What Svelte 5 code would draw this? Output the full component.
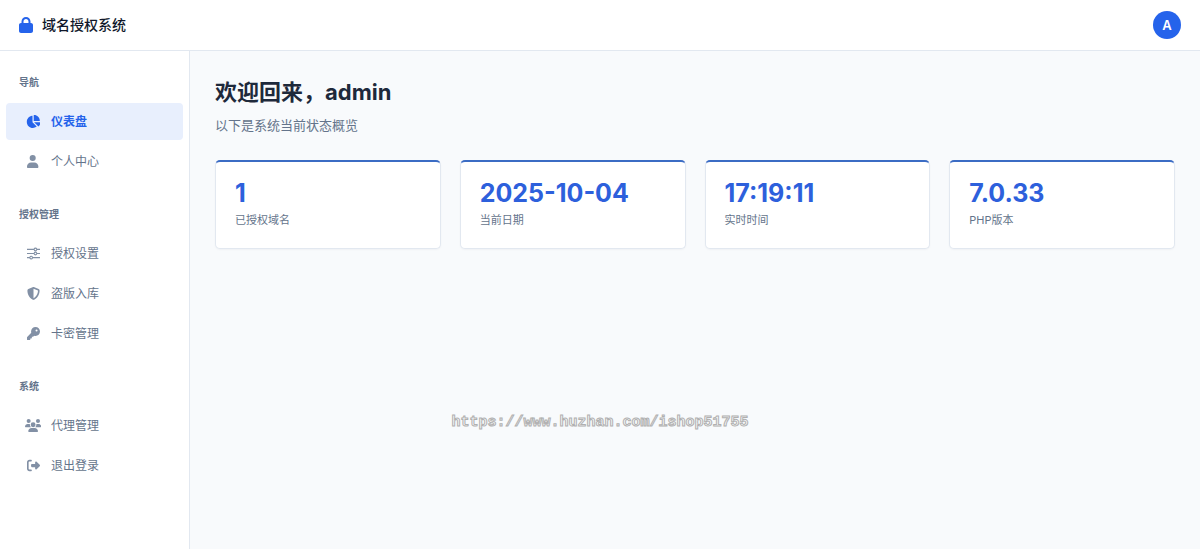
<script lang="ts">
  interface NavItem {
    label: string
    icon: string
    href: string
  }

  interface NavGroup {
    title: string
    items: NavItem[]
  }

  const username = 'admin'
  const current = '#dashboard'

  const groups: NavGroup[] = [
    {
      title: '导航',
      items: [
        { label: '仪表盘', icon: 'pie', href: '#dashboard' },
        { label: '个人中心', icon: 'user', href: '#profile' },
      ],
    },
    {
      title: '授权管理',
      items: [
        { label: '授权设置', icon: 'sliders', href: '#auth' },
        { label: '盗版入库', icon: 'shield', href: '#piracy' },
        { label: '卡密管理', icon: 'key', href: '#cards' },
      ],
    },
    {
      title: '系统',
      items: [
        { label: '代理管理', icon: 'users', href: '#agents' },
        { label: '退出登录', icon: 'logout', href: '#logout' },
      ],
    },
  ]

  const stats = [
    { value: '1', label: '已授权域名' },
    { value: '2025-10-04', label: '当前日期' },
    { value: '17:19:11', label: '实时时间' },
    { value: '7.0.33', label: 'PHP版本' },
  ]

  // width is the viewBox width, every icon is 512 high
  const icons: Record<string, { width: number; path: string }> = {
    pie: {
      width: 576,
      path: 'M304 240V16.6c0-9 7-16.6 16-16.6C443.7 0 544 100.3 544 224c0 9-7.6 16-16.6 16H304zM32 272C32 150.7 122.1 50.3 239 34.3c9.2-1.3 17 6.1 17 15.4V288L412.5 444.5c6.7 6.7 6.2 17.7-1.5 23.1C371.8 495.6 323.8 512 272 512C139.5 512 32 404.6 32 272zm526.4 16c9.3 0 16.6 7.8 15.4 17c-7.7 55.9-34.6 105.6-73.9 142.3c-6 5.6-15.4 5.2-21.2-.7L320 288H558.4z',
    },
    user: {
      width: 448,
      path: 'M224 240A120 120 0 1 0 224 0a120 120 0 1 0 0 240zM160 296C70 296 0 366 0 452v20c0 22 16 40 38 40H410c22 0 38-18 38-40v-20C448 366 378 296 288 296H160z',
    },
    sliders: {
      width: 512,
      path: 'M0 72h262a74 74 0 0 1 140 0H512v48H402a74 74 0 0 1-140 0H0zM332 64a32 32 0 1 0 0 64 32 32 0 1 0 0-64zM0 232h262a74 74 0 0 1 140 0H512v48H402a74 74 0 0 1-140 0H0zM332 224a32 32 0 1 0 0 64 32 32 0 1 0 0-64zM0 392h94a74 74 0 0 1 140 0H512v48H234a74 74 0 0 1-140 0H0zM164 384a32 32 0 1 0 0 64 32 32 0 1 0 0-64z',
    },
    shield: {
      width: 512,
      path: 'M256 0c4.6 0 9.2 1 13.4 2.9L457.7 82.8c22 9.3 38.4 31 38.3 57.2c-.5 99.2-41.3 280.7-213.6 363.2c-16.7 8-36.1 8-52.8 0C57.3 420.7 16.5 239.2 16 140c-.1-26.2 16.3-47.9 38.3-57.2L242.7 2.9C246.8 1 251.4 0 256 0zm0 66.8V444.8C394 378 431.1 230.1 432 141.4L256 66.8z',
    },
    key: {
      width: 512,
      path: 'M336 352c97.2 0 176-78.8 176-176S433.2 0 336 0S160 78.8 160 176c0 18.7 2.9 36.8 8.3 53.7L7 391c-4.5 4.5-7 10.6-7 17v80c0 13.3 10.7 24 24 24h80c13.3 0 24-10.7 24-24V448h40c13.3 0 24-10.7 24-24V384h40c6.4 0 12.5-2.5 17-7l33.3-33.3c16.9 5.4 35 8.3 53.7 8.3zM376 96a40 40 0 1 1 0 80 40 40 0 1 1 0-80z',
    },
    users: {
      width: 640,
      path: 'M144 0a80 80 0 1 1 0 160A80 80 0 1 1 144 0zM512 0a80 80 0 1 1 0 160A80 80 0 1 1 512 0zM0 298.7C0 239.8 47.8 192 106.7 192h42.7c15.9 0 31 3.5 44.6 9.7c-1.3 7.2-1.9 14.7-1.9 22.3c0 38.2 16.8 72.5 43.3 96c-.2 0-.4 0-.7 0H21.3C9.6 320 0 310.4 0 298.7zM405.3 320c-.2 0-.4 0-.7 0c26.6-23.5 43.3-57.8 43.3-96c0-7.6-.7-15-1.9-22.3c13.6-6.3 28.7-9.7 44.6-9.7h42.7C592.2 192 640 239.8 640 298.7c0 11.8-9.6 21.3-21.3 21.3H405.3zM224 224a96 96 0 1 1 192 0 96 96 0 1 1 -192 0zM128 485.3C128 411.7 187.7 352 261.3 352H378.7C452.3 352 512 411.7 512 485.3c0 14.7-11.9 26.7-26.7 26.7H154.7c-14.7 0-26.7-11.9-26.7-26.7z',
    },
    logout: {
      width: 512,
      path: 'M377.9 105.9L500.7 228.7c7.2 7.2 11.3 17.1 11.3 27.3s-4.1 20.1-11.3 27.3L377.9 406.1c-6.4 6.4-15 9.9-24 9.9c-18.7 0-33.9-15.2-33.9-33.9l0-62.1-128 0c-17.7 0-32-14.3-32-32l0-64c0-17.7 14.3-32 32-32l128 0 0-62.1c0-18.7 15.2-33.9 33.9-33.9c9 0 17.6 3.6 24 9.9zM160 96L96 96c-17.7 0-32 14.3-32 32l0 256c0 17.7 14.3 32 32 32l64 0c17.7 0 32 14.3 32 32s-14.3 32-32 32l-64 0c-53 0-96-43-96-96L0 128C0 75 43 32 96 32l64 0c17.7 0 32 14.3 32 32s-14.3 32-32 32z',
    },
  }
</script>

<div class="layout">
  <header class="topbar">
    <a class="brand" href="#dashboard">
      <svg class="brand__icon" viewBox="0 0 448 512" aria-hidden="true">
        <path d="M144 144v48H304V144c0-44.2-35.8-80-80-80s-80 35.8-80 80zM80 192V144C80 64.5 144.5 0 224 0s144 64.5 144 144v48h16c35.3 0 64 28.7 64 64V448c0 35.3-28.7 64-64 64H64c-35.3 0-64-28.7-64-64V256c0-35.3 28.7-64 64-64H80z" />
      </svg>
      <span>域名授权系统</span>
    </a>
    <button class="avatar" type="button">{username[0].toUpperCase()}</button>
  </header>

  <div class="body">
    <nav class="sidebar">
      {#each groups as group (group.title)}
        <section class="nav-group">
          <h2 class="nav-group__title">{group.title}</h2>
          <ul class="nav-group__list">
            {#each group.items as item (item.href)}
              {@const icon = icons[item.icon]}
              <li>
                <a
                  class="nav-link"
                  class:nav-link--active={item.href === current}
                  href={item.href}
                  aria-current={item.href === current ? 'page' : undefined}
                >
                  <span class="nav-link__icon">
                    <svg viewBox="0 0 {icon.width} 512" aria-hidden="true">
                      <path d={icon.path} fill-rule="evenodd" />
                    </svg>
                  </span>
                  <span>{item.label}</span>
                </a>
              </li>
            {/each}
          </ul>
        </section>
      {/each}
    </nav>

    <main class="content">
      <h1 class="content__title">欢迎回来，{username}</h1>
      <p class="content__subtitle">以下是系统当前状态概览</p>

      <div class="stats">
        {#each stats as stat (stat.label)}
          <div class="stat">
            <div class="stat__value">{stat.value}</div>
            <div class="stat__label">{stat.label}</div>
          </div>
        {/each}
      </div>
    </main>
  </div>

  <div class="watermark">https://www.huzhan.com/ishop51755</div>
</div>

<style>
  :global(body) {
    background: #f8fafc;
  }

  .layout {
    position: relative;
    display: flex;
    flex-direction: column;
    min-height: 100vh;
    font-family: Inter, 'Noto Sans CJK SC', sans-serif;
    color: #1e293b;
  }

  .topbar {
    display: flex;
    align-items: center;
    justify-content: space-between;
    height: 50px;
    padding: 0 19px;
    background: #fff;
    border-bottom: 1px solid #e2e8f0;
  }

  .brand {
    display: flex;
    align-items: center;
    gap: 9px;
    font-size: 14px;
    line-height: 20px;
    font-weight: 500;
    color: #0f172a;
    text-decoration: none;
  }

  .brand__icon {
    height: 16px;
    fill: #2563eb;
  }

  .avatar {
    width: 28px;
    height: 28px;
    padding: 0;
    border: 0;
    border-radius: 50%;
    background: #2563eb;
    color: #fff;
    font: inherit;
    font-size: 13px;
    font-weight: 600;
    cursor: pointer;
  }

  .body {
    display: flex;
    flex: 1;
  }

  .sidebar {
    display: flex;
    flex-direction: column;
    flex: none;
    gap: 26px;
    box-sizing: border-box;
    width: 190px;
    padding: 23px 6px;
    background: #fff;
    border-right: 1px solid #e2e8f0;
  }

  .nav-group__title {
    margin: 0 0 13px;
    padding: 0 13px;
    font-size: 10px;
    line-height: 16px;
    font-weight: 600;
    color: #64748b;
  }

  .nav-group__list {
    display: flex;
    flex-direction: column;
    gap: 3px;
    margin: 0;
    padding: 0;
    list-style: none;
  }

  .nav-link {
    display: flex;
    align-items: center;
    gap: 10px;
    height: 37px;
    padding: 0 19px;
    border-radius: 4px;
    font-size: 12px;
    line-height: 19px;
    color: #64748b;
    text-decoration: none;
  }

  .nav-link:hover {
    background: #f1f5f9;
  }

  .nav-link--active,
  .nav-link--active:hover {
    background: #e8effd;
    color: #2563eb;
    font-weight: 600;
  }

  .nav-link__icon {
    display: flex;
    justify-content: center;
    width: 16px;
    color: #8290a5;
  }

  .nav-link__icon svg {
    flex: none;
    height: 13px;
    fill: currentColor;
  }

  .nav-link--active .nav-link__icon {
    color: #2563eb;
  }

  .content {
    flex: 1;
    min-width: 0;
    padding: 25px;
  }

  .content__title {
    margin: 0 0 7px;
    font-size: 22px;
    line-height: 32px;
    font-weight: 700;
  }

  .content__subtitle {
    margin: 0 0 25px;
    font-size: 13px;
    line-height: 20px;
    color: #64748b;
  }

  .stats {
    display: grid;
    grid-template-columns: repeat(4, 1fr);
    gap: 19px;
  }

  .stat {
    padding: 15px 19px 20px;
    background: #fff;
    border: 1px solid #e2e8f0;
    border-top: 2px solid #3b6cc4;
    border-radius: 5px;
    box-shadow: 0 1px 2px rgba(15, 23, 42, 0.04);
  }

  .stat__value {
    margin-bottom: 3px;
    font-size: 25px;
    line-height: 32px;
    font-weight: 700;
    color: #2d60dc;
  }

  .stat__label {
    font-size: 11px;
    line-height: 16px;
    color: #64748b;
  }

  /* Outlined stamp laid over the page */
  .watermark {
    position: absolute;
    top: 77%;
    left: 50%;
    transform: translate(-50%, -50%);
    font-family: 'Liberation Mono', monospace;
    font-size: 15px;
    line-height: 20px;
    font-weight: 700;
    color: #f8f9fa;
    -webkit-text-stroke: 1px #b0b0b0;
    pointer-events: none;
  }
</style>
